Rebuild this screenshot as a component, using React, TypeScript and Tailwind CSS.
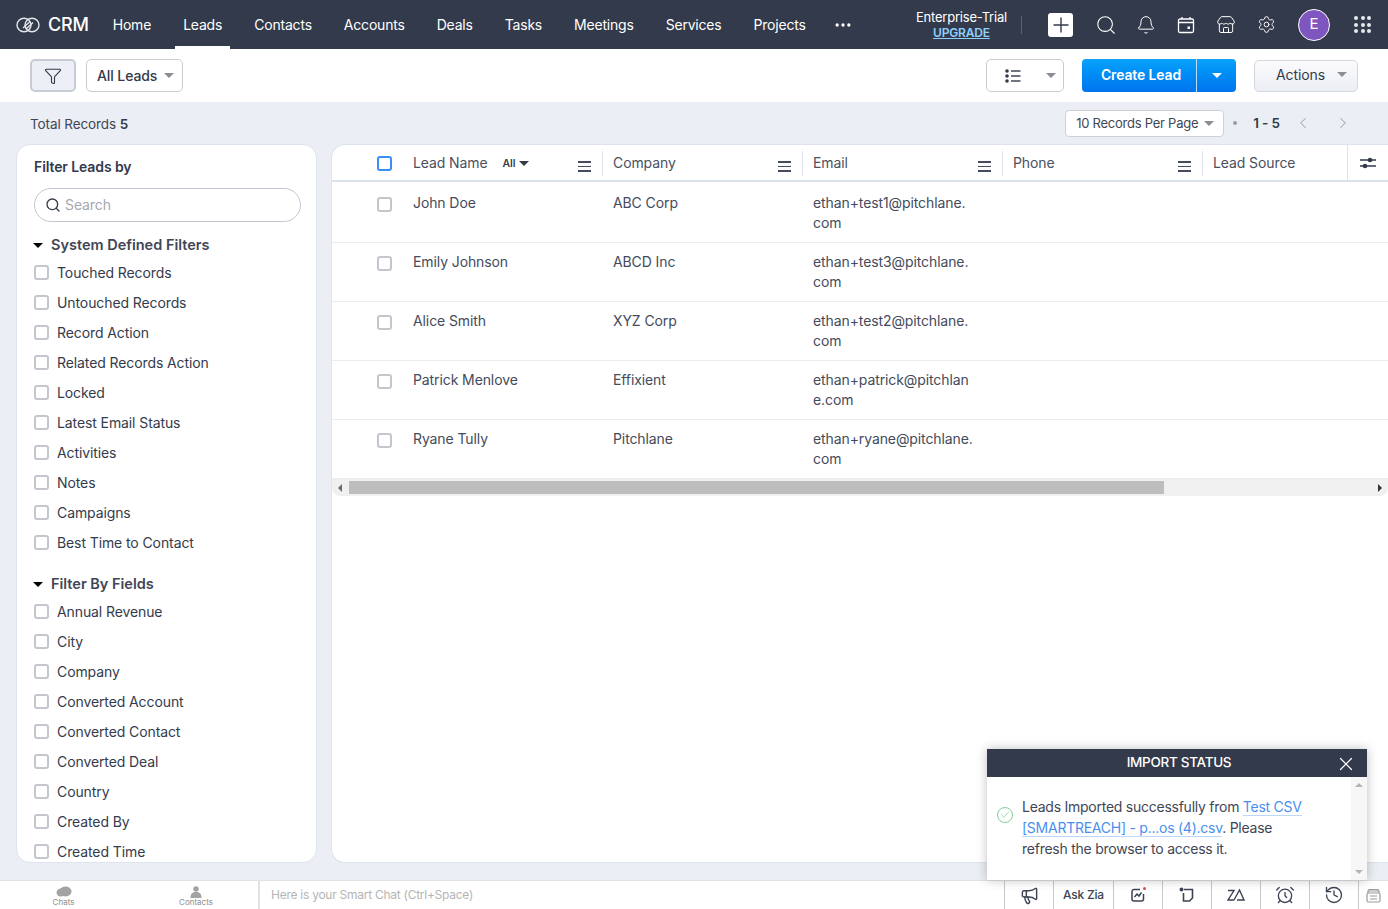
import { Bell, ChevronLeft, ChevronRight, Filter, MoreHorizontal, Plus, Search, Settings, X, AlarmClock, Megaphone, History, Store, Check } from "lucide-react";

const nav = ["Home", "Leads", "Contacts", "Accounts", "Deals", "Tasks", "Meetings", "Services", "Projects"];
const systemFilters = ["Touched Records", "Untouched Records", "Record Action", "Related Records Action", "Locked", "Latest Email Status", "Activities", "Notes", "Campaigns", "Best Time to Contact"];
const fieldFilters = ["Annual Revenue", "City", "Company", "Converted Account", "Converted Contact", "Converted Deal", "Country", "Created By", "Created Time"];
const leads = [
  { name: "John Doe", company: "ABC Corp", email: ["ethan+test1@pitchlane.", "com"] },
  { name: "Emily Johnson", company: "ABCD Inc", email: ["ethan+test3@pitchlane.", "com"] },
  { name: "Alice Smith", company: "XYZ Corp", email: ["ethan+test2@pitchlane.", "com"] },
  { name: "Patrick Menlove", company: "Effixient", email: ["ethan+patrick@pitchlan", "e.com"] },
  { name: "Ryane Tully", company: "Pitchlane", email: ["ethan+ryane@pitchlane.", "com"] },
];

function Caret({ className }: { className: string }) {
  return <span className={"inline-block h-0 w-0 border-x-[5px] border-t-[5px] border-x-transparent " + className} />;
}

function ColMenu() {
  return (
    <span className="flex w-[13px] flex-col gap-[3px]">
      <span className="h-[1.5px] bg-[#444b5c]" />
      <span className="h-[1.5px] bg-[#444b5c]" />
      <span className="h-[1.5px] bg-[#444b5c]" />
    </span>
  );
}

function Box({ className = "border-[#c3c6cd]" }: { className?: string }) {
  return <span className={"block h-[15px] w-[15px] shrink-0 rounded-[3px] border-2 bg-white " + className} />;
}

function FilterRow({ label }: { label: string }) {
  return (
    <div className="flex h-[30px] items-center gap-[8px] pl-[17px] text-[14px] tracking-[-0.1px] text-[#343b4c]">
      <Box />
      <span>{label}</span>
    </div>
  );
}

function HeaderCell({ label, extra }: { label: string; extra?: boolean }) {
  return (
    <div className="mt-[6px] flex h-[25px] w-[200px] shrink-0 items-center border-r border-[#dbe2ec] pl-[10px] pr-[11px] text-[14px] tracking-[-0.1px] text-[#4a505f]">
      <span className="-mt-[3px]">{label}</span>
      {extra && (
        <span className="ml-[15px] flex items-center gap-[4px] text-[10.5px] font-semibold text-[#343b4c]">
          All <Caret className="border-t-[#343b4c]" />
        </span>
      )}
      <span className="ml-auto mt-[6px]">
        <ColMenu />
      </span>
    </div>
  );
}

function BottomTool({ children, w = "w-[49px]" }: { children: React.ReactNode; w?: string }) {
  return <div className={"flex h-full items-center justify-center border-l border-[#c9c9c9] text-[#3c4352] " + w}>{children}</div>;
}

export default function App() {
  return (
    <div className="relative flex h-[909px] w-[1388px] flex-col overflow-hidden bg-[#ebeef4] font-['Inter',sans-serif]">
      {/* top nav */}
      <header className="flex h-[49px] shrink-0 items-center bg-[#333a4b] pl-[16px] pr-[17px] text-white">
        <svg width="24" height="16" viewBox="0 0 24 16" fill="none" stroke="#e4e6ea" strokeWidth="1.4">
          <ellipse cx="8" cy="8" rx="7" ry="6.8" />
          <ellipse cx="16" cy="8" rx="7" ry="6.8" />
          <path d="M7 11 L14 4.6 M10 12 L17 5.6" />
        </svg>
        <span className="ml-[8px] text-[18px] font-medium tracking-[-0.2px]">CRM</span>
        <nav className="ml-[8px] flex h-full items-center text-[14px] tracking-[-0.2px]">
          {nav.map((n) => (
            <div key={n} className={"relative flex h-full items-center px-[16px] " + (n === "Leads" ? "after:absolute after:inset-x-[8px] after:bottom-0 after:h-[3px] after:bg-white" : "")}>
              {n}
            </div>
          ))}
          <MoreHorizontal className="ml-[11px] h-[20px] w-[20px]" />
        </nav>
        <div className="ml-auto flex flex-col items-center whitespace-nowrap text-[13px] leading-[15px] tracking-[-0.2px]">
          <span>Enterprise-Trial</span>
          <span className="text-[12px] font-semibold tracking-[-0.2px] text-[#8ed0fb] underline">UPGRADE</span>
        </div>
        <span className="ml-[14px] h-[18px] w-[1px] bg-[#5c6372]" />
        <div className="ml-[26px] flex h-[24px] w-[25px] items-center justify-center rounded-[3px] bg-white">
          <Plus className="h-[24px] w-[24px] text-[#333a4b]" strokeWidth={1.4} />
        </div>
        <Search className="ml-[22px] h-[22px] w-[22px]" strokeWidth={1.2} />
        <Bell className="ml-[19px] h-[20px] w-[20px]" strokeWidth={1.2} />
        <svg className="ml-[21px]" width="18" height="18" viewBox="0 0 18 18" fill="none" stroke="currentColor" strokeWidth="1.3">
          <rect x="1.5" y="3" width="15" height="13.5" rx="1.5" />
          <path d="M1.5 6.5 H16.5 M5 1 V3 M13 1 V3" />
          <rect x="10.5" y="10.5" width="2.5" height="2.5" fill="currentColor" stroke="none" />
        </svg>
        <Store className="ml-[21px] h-[20px] w-[20px]" strokeWidth={1.2} />
        <Settings className="ml-[21px] h-[19px] w-[19px]" strokeWidth={1.2} />
        <div className="ml-[22px] flex h-[32px] w-[32px] items-center justify-center rounded-full border border-white bg-[#7f56c0] text-[15px]">E</div>
        <div className="ml-[24px] grid grid-cols-3 gap-[2.5px]">
          {Array.from({ length: 9 }).map((_, i) => (
            <span key={i} className="h-[4px] w-[4px] rounded-full bg-[#e8e9ec]" />
          ))}
        </div>
      </header>

      {/* toolbar */}
      <div className="flex h-[53px] shrink-0 items-center bg-white pl-[30px] pr-[30px]">
        <button className="flex h-[33px] w-[46px] items-center justify-center rounded-[5px] border-2 border-[#c7cbd4] bg-[#eceff5]">
          <Filter className="h-[18px] w-[18px] text-[#333a4b]" strokeWidth={1.5} />
        </button>
        <button className="ml-[10px] flex h-[33px] w-[97px] items-center gap-[7px] whitespace-nowrap rounded-[5px] border border-[#c9ccd3] pl-[10px] text-[14px] font-medium tracking-[-0.1px] text-[#333a4b]">
          All Leads <Caret className="border-t-[#8a8d96]" />
        </button>
        <button className="ml-auto flex h-[33px] w-[78px] items-center rounded-[5px] border border-[#c9ccd3] pl-[18px]">
          <svg width="16" height="14" viewBox="0 0 16 14" fill="#333a4b">
            <circle cx="2" cy="2" r="1.8" />
            <circle cx="2" cy="7" r="1.8" />
            <circle cx="2" cy="12" r="1.8" />
            <rect x="6" y="1.3" width="9.5" height="1.4" />
            <rect x="6" y="6.3" width="9.5" height="1.4" />
            <rect x="6" y="11.3" width="9.5" height="1.4" />
          </svg>
          <Caret className="ml-[25px] border-t-[#8a8d96]" />
        </button>
        <div className="ml-[18px] flex h-[33px] w-[154px] overflow-hidden rounded-[4px] bg-gradient-to-b from-[#0ba2fb] to-[#0073ee] text-white">
          <span className="flex w-[114px] items-center justify-center whitespace-nowrap pb-[2px] pl-[4px] text-[14px] font-semibold tracking-[-0.15px]">Create Lead</span>
          <span className="flex flex-1 items-center justify-center border-l border-[#bcdcfb]">
            <Caret className="border-t-white" />
          </span>
        </div>
        <button className="ml-[18px] flex h-[32px] w-[104px] items-center rounded-[5px] border border-[#d3d7e0] bg-gradient-to-b from-[#fbfbfd] to-[#eceef5] pb-[2px] pl-[21px] text-[14px] tracking-[-0.1px] text-[#333a4b]">
          Actions <Caret className="ml-[12px] border-t-[#8a8d96]" />
        </button>
      </div>

      {/* records strip */}
      <div className="flex h-[42px] shrink-0 items-center pl-[30px] pr-[36px] text-[13.5px] tracking-[-0.1px] text-[#3f4656]">
        <span className="mt-[2px]">Total Records <span className="font-semibold text-[#333a4b]">5</span></span>
        <button className="ml-auto flex h-[27px] w-[159px] items-center whitespace-nowrap rounded-[4px] border border-[#cdd0d7] bg-white pl-[10px] pt-[1px] text-[13px] tracking-[-0.25px] text-[#3f4656]">
          10 Records Per Page <Caret className="ml-[6px] border-t-[#8a8d96]" />
        </button>
        <span className="ml-[9px] h-[4px] w-[4px] rounded-full bg-[#9a9da6]" />
        <span className="ml-[16px] text-[13.5px] font-semibold text-[#333a4b]">1 - 5</span>
        <ChevronLeft className="ml-[14px] h-[18px] w-[18px] text-[#a6a9b1]" strokeWidth={1.4} />
        <ChevronRight className="ml-[22px] h-[18px] w-[18px] text-[#a6a9b1]" strokeWidth={1.4} />
      </div>

      {/* body */}
      <div className="flex h-[719px] shrink-0 gap-[14px] pl-[16px]">
        <aside className="h-full w-[301px] shrink-0 overflow-hidden rounded-[14px] border border-[#dde4ee] bg-white">
          <div className="pl-[17px] pt-[13px] text-[14px] font-semibold leading-[18px] tracking-[-0.1px] text-[#333a4b]">Filter Leads by</div>
          <div className="ml-[17px] mt-[12px] flex h-[34px] w-[267px] items-center gap-[4px] rounded-full border border-[#c3c6d0] pb-[1px] pl-[10px] text-[14px] tracking-[-0.1px] text-[#a5a8b2]">
            <Search className="h-[16px] w-[16px] text-[#333a4b]" strokeWidth={2} />
            Search
          </div>
          <div className="mt-[13px] flex h-[20px] items-center gap-[8px] pl-[16px] text-[14.5px] font-semibold text-[#3f4656]">
            <Caret className="border-t-black" />
            System Defined Filters
          </div>
          <div className="mt-[2px]">
            {systemFilters.map((f) => (
              <FilterRow key={f} label={f} />
            ))}
          </div>
          <div className="mt-[17px] flex h-[20px] items-center gap-[8px] pl-[16px] text-[14.5px] font-semibold text-[#3f4656]">
            <Caret className="border-t-black" />
            Filter By Fields
          </div>
          <div className="mt-[2px]">
            {fieldFilters.map((f) => (
              <FilterRow key={f} label={f} />
            ))}
          </div>
        </aside>

        <main className="h-full flex-1 overflow-hidden rounded-l-[14px] border-y border-l border-[#dde4ee] bg-white">
          <div className="flex h-[37px] border-b-2 border-[#dbe2ec]">
            <div className="flex w-[71px] shrink-0 items-center pl-[45px] pt-[2px]">
              <Box className="border-[#3a8ef5]" />
            </div>
            <HeaderCell label="Lead Name" extra />
            <HeaderCell label="Company" />
            <HeaderCell label="Email" />
            <HeaderCell label="Phone" />
            <div className="flex w-[145px] shrink-0 items-center border-r border-[#dbe2ec] pl-[10px] text-[14px] tracking-[-0.1px] text-[#4a505f]">
              <span>Lead Source</span>
            </div>
            <div className="flex flex-1 items-center justify-center">
              <svg width="18" height="12" viewBox="0 0 18 12" stroke="#333a4b" strokeWidth="1.4">
                <path d="M1 3 H9 M13 3 H17 M1 9 H4 M8 9 H17" />
                <circle cx="11" cy="3" r="1.6" fill="#333a4b" />
                <circle cx="6" cy="9" r="1.6" fill="#333a4b" />
              </svg>
            </div>
          </div>
          {leads.map((l, i) => (
            <div key={l.name} className={"flex border-b border-[#ebedf2] text-[14px] leading-[20px] tracking-[-0.1px] text-[#444b5c] " + (i === 0 ? "h-[61px]" : "h-[59px]")}>
              <div className={"w-[71px] shrink-0 pl-[45px] " + (i === 0 ? "pt-[15px]" : "pt-[13px]")}>
                <Box />
              </div>
              <div className={"w-[200px] shrink-0 pl-[10px] " + (i === 0 ? "pt-[11px]" : "pt-[9px]")}>{l.name}</div>
              <div className={"w-[200px] shrink-0 pl-[10px] " + (i === 0 ? "pt-[11px]" : "pt-[9px]")}>{l.company}</div>
              <div className={"w-[200px] shrink-0 pl-[10px] " + (i === 0 ? "pt-[11px]" : "pt-[9px]")}>
                {l.email[0]}
                <br />
                {l.email[1]}
              </div>
            </div>
          ))}
          <div className="flex h-[17px] items-center rounded-b-[8px] bg-[#f0f0f0]">
            <span className="ml-[6px] h-0 w-0 border-y-[4px] border-r-[4px] border-y-transparent border-r-[#6b6b6b]" />
            <span className="ml-[7px] h-[13px] w-[815px] bg-[#bdbdbd]" />
            <span className="ml-auto mr-[6px] h-0 w-0 border-y-[4px] border-l-[4px] border-y-transparent border-l-[#333]" />
          </div>
        </main>
      </div>

      {/* bottom chat bar */}
      <footer className="mt-auto flex h-[29px] shrink-0 items-center border-t border-[#e0e2e6] bg-white">
        <div className="flex h-full w-[260px] shrink-0 border-r-2 border-[#e3e3e3] text-[8px] leading-[9px] text-[#8d8d8d]">
          <div className="flex w-[127px] shrink-0 flex-col items-center pt-[5px]">
            <svg width="16" height="12" viewBox="0 0 16 12" fill="#a3a3a3">
              <ellipse cx="9.5" cy="5.5" rx="6" ry="5" />
              <ellipse cx="5" cy="6.5" rx="4.5" ry="4" />
            </svg>
            Chats
          </div>
          <div className="flex w-[133px] shrink-0 flex-col items-center pl-[5px] pt-[5px]">
            <svg width="12" height="12" viewBox="0 0 12 13" fill="#a3a3a3">
              <circle cx="6" cy="3.2" r="3" />
              <path d="M0 13 C0 8 2.5 6.5 6 6.5 C9.5 6.5 12 8 12 13 Z" />
            </svg>
            Contacts
          </div>
        </div>
        <span className="whitespace-nowrap pl-[11px] text-[12px] tracking-[-0.26px] text-[#b5b5b5]">Here is your Smart Chat (Ctrl+Space)</span>
        <div className="ml-auto flex h-full items-center">
          <BottomTool>
            <Megaphone className="h-[19px] w-[19px]" strokeWidth={1.8} />
          </BottomTool>
          <BottomTool w="w-[60px]">
            <span className="text-[12px] font-medium tracking-[-0.2px]">Ask Zia</span>
          </BottomTool>
          <BottomTool>
            <span className="relative">
              <svg width="16" height="16" viewBox="0 0 16 16" fill="none" stroke="currentColor" strokeWidth="1.5">
                <path d="M13.5 7 V12 A2 2 0 0 1 11.5 14 H4 A2 2 0 0 1 2 12 V4.5 A2 2 0 0 1 4 2.5 H10" />
                <path d="M4.5 10 L7 7 L9 9 L11.5 5.5" />
              </svg>
              <span className="absolute right-0 top-0 h-[3px] w-[3px] rounded-full bg-[#e5484d]" />
            </span>
          </BottomTool>
          <BottomTool>
            <svg width="16" height="16" viewBox="0 0 16 16" fill="none" stroke="currentColor" strokeWidth="1.6">
              <path d="M5 2.5 H13.5 V11 L10.5 14 H4.5 V6" />
              <circle cx="2.5" cy="2.5" r="1.2" fill="currentColor" />
            </svg>
          </BottomTool>
          <BottomTool>
            <svg width="18" height="14" viewBox="0 0 18 14" fill="none" stroke="currentColor" strokeWidth="1.4">
              <path d="M1 2.5 H7 L1 12 H7 M7 12 L12.5 2 L17 12 H10" />
            </svg>
          </BottomTool>
          <BottomTool>
            <AlarmClock className="h-[20px] w-[20px]" strokeWidth={1.6} />
          </BottomTool>
          <BottomTool>
            <History className="h-[20px] w-[20px]" strokeWidth={1.6} />
          </BottomTool>
          <div className="flex h-full w-[30px] items-center justify-center border-l border-[#c9c9c9] text-[#9a9a9a]">
            <svg width="15" height="15" viewBox="0 0 15 15" fill="none" stroke="currentColor" strokeWidth="1.2">
              <path d="M3 3 V1.5 H12 V3 M2 5 V3 H13 V5" />
              <rect x="1" y="5" width="13" height="9" rx="1.5" />
              <path d="M4 8 H11 M4 11 H11" />
            </svg>
          </div>
        </div>
      </footer>

      {/* import status popup */}
      <div className="absolute left-[987px] top-[749px] h-[131px] w-[380px] bg-white shadow-[0_0_10px_rgba(0,0,0,0.25)]">
        <div className="relative flex h-[28px] items-center justify-center bg-[#333a4b] pb-[1px] pl-[4px] text-[13.5px] font-medium tracking-[-0.3px] text-white">
          IMPORT STATUS
          <X className="absolute right-[10px] top-[4px] h-[22px] w-[22px]" strokeWidth={1.3} />
        </div>
        <div className="flex h-[103px]">
          <div className="flex flex-1 items-start pl-[10px] pt-[19px]">
            <span className="mt-[11px] flex h-[16px] w-[16px] shrink-0 items-center justify-center rounded-full border border-[#7ed19a]">
              <Check className="h-[10px] w-[10px] text-[#7ed19a]" strokeWidth={2} />
            </span>
            <div className="ml-[9px] whitespace-nowrap text-[14px] leading-[21px] tracking-[-0.25px] text-[#3f4656]">
              <div>
                Leads Imported successfully from <span className="border-b border-[#bcd8f8] text-[#4a8ff0]">Test CSV</span>
              </div>
              <div>
                <span className="border-b border-[#bcd8f8] text-[#4a8ff0]">[SMARTREACH] - p...os (4).csv</span>. Please
              </div>
              <div>refresh the browser to access it.</div>
            </div>
          </div>
          <div className="flex w-[16px] flex-col items-center justify-between bg-[#f7f7f7] py-[6px]">
            <span className="h-0 w-0 border-x-[4px] border-b-[4px] border-x-transparent border-b-[#b5b5b5]" />
            <span className="h-0 w-0 border-x-[4px] border-t-[4px] border-x-transparent border-t-[#b5b5b5]" />
          </div>
        </div>
      </div>
    </div>
  );
}
